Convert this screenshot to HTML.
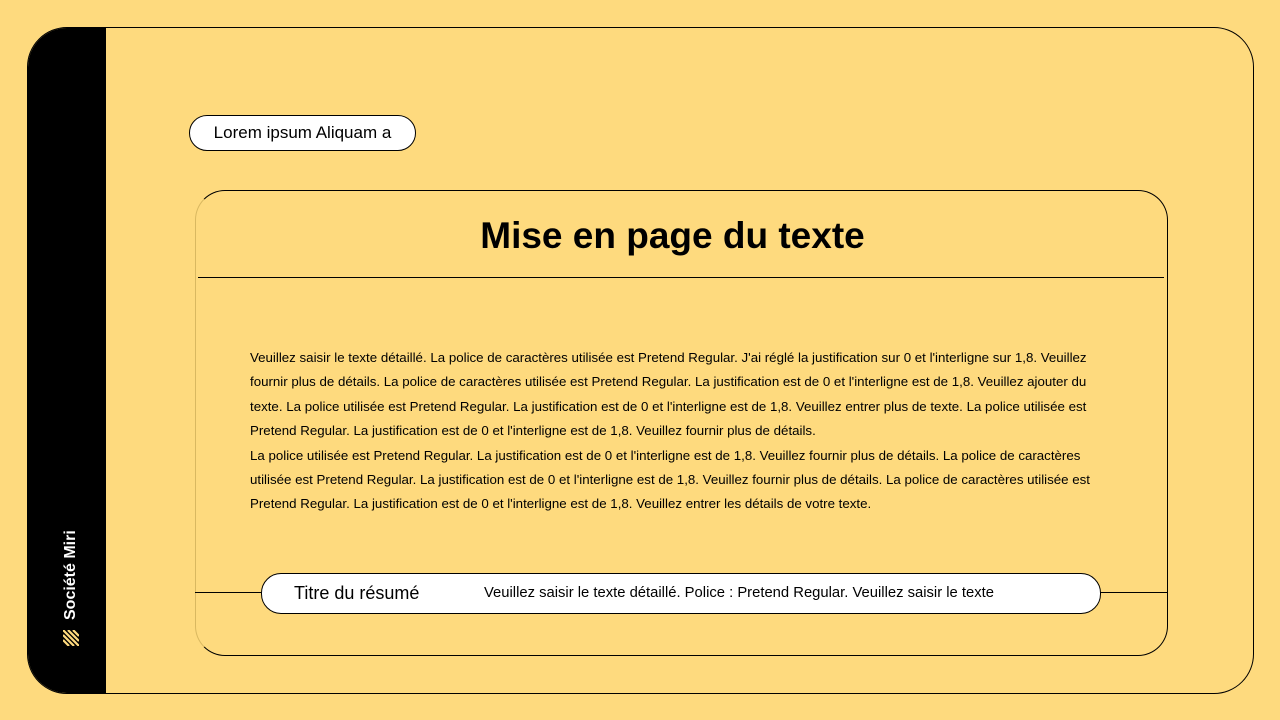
<!DOCTYPE html>
<html><head><meta charset="utf-8"><style>
body{margin:0;width:1280px;height:720px;background:#FEDA7E;position:relative;overflow:hidden;font-family:"Liberation Sans",sans-serif;color:#000}
.frame{position:absolute;left:27px;top:27px;width:1225px;height:665px;border:1px solid #000;border-radius:40px;overflow:hidden}
.side{position:absolute;left:0;top:0;width:78px;height:100%;background:#000}
.brand{position:absolute;left:62px;top:646px;transform-origin:0 0;transform:rotate(-90deg);color:#fff;font-size:16px;font-weight:bold;white-space:nowrap;display:flex;align-items:center;gap:10px;height:17px}
.pill1{position:absolute;left:189px;top:115px;width:225px;height:34px;border:1px solid #000;border-radius:18px;background:#fff;font-size:17px;line-height:34px;text-align:center}
.card{position:absolute;left:195px;top:190px;width:971px;height:464px;border:1px solid #000;border-left-color:#d9b860;border-radius:30px}
h1{position:absolute;left:195px;top:213px;width:955px;margin:0;text-align:center;font-size:37px;font-weight:bold;line-height:46px}
.hr{position:absolute;left:198px;top:277px;width:966px;height:1px;background:#000}
.txt{position:absolute;left:250px;top:346px;width:870px;font-size:13.3px;line-height:24.4px}
.ln{position:absolute;top:592px;height:1px;background:#000}
.pill2{position:absolute;left:261px;top:573px;width:838px;height:39px;border:1px solid #000;border-radius:20px;background:#fff;font-size:14.8px;line-height:38px}
</style></head><body>
<div class="frame"><div class="side"></div></div>
<div class="brand"><svg width="16" height="16" viewBox="0 0 16 16"><path d="M0 16L16 0M5 16L16 5M10 16L16 10M0 11L11 0M0 6L6 0" stroke="#FEDA7E" stroke-width="2.2"/></svg><span>Société Miri</span></div>
<div class="pill1">Lorem ipsum Aliquam a</div>
<div class="card"></div>
<h1>Mise en page du texte</h1>
<div class="hr"></div>
<div class="txt">Veuillez saisir le texte détaillé. La police de caractères utilisée est Pretend Regular. J'ai réglé la justification sur 0 et l'interligne sur 1,8. Veuillez fournir plus de détails. La police de caractères utilisée est Pretend Regular. La justification est de 0 et l'interligne est de 1,8. Veuillez ajouter du texte. La police utilisée est Pretend Regular. La justification est de 0 et l'interligne est de 1,8. Veuillez entrer plus de texte. La police utilisée est Pretend Regular. La justification est de 0 et l'interligne est de 1,8. Veuillez fournir plus de détails.<br>La police utilisée est Pretend Regular. La justification est de 0 et l'interligne est de 1,8. Veuillez fournir plus de détails. La police de caractères utilisée est Pretend Regular. La justification est de 0 et l'interligne est de 1,8. Veuillez fournir plus de détails. La police de caractères utilisée est Pretend Regular. La justification est de 0 et l'interligne est de 1,8. Veuillez entrer les détails de votre texte.</div>
<div class="ln" style="left:195px;width:66px"></div>
<div class="ln" style="left:1100px;width:67px"></div>
<div class="pill2"><span style="position:absolute;left:32px;font-size:18px">Titre du résumé</span><span style="position:absolute;left:222px">Veuillez saisir le texte détaillé. Police : Pretend Regular. Veuillez saisir le texte</span></div>
</body></html>
